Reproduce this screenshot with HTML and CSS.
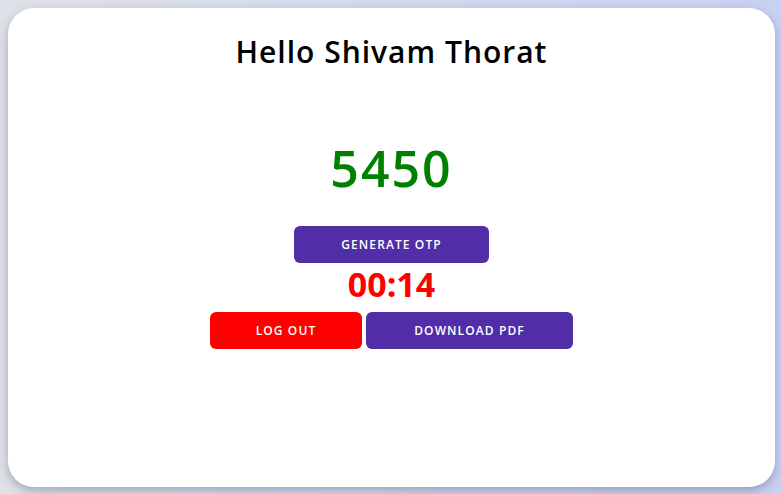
FILE: index.html
```html
<!DOCTYPE html>
<html lang="en">
<head>
<meta charset="utf-8">
<title>OTP</title>
<link rel="stylesheet" href="styles.css">
</head>
<body>
  <main class="card">
    <h1 class="greeting">Hello Shivam Thorat</h1>
    <div class="otp">5450</div>
    <button class="btn btn-primary btn-generate">Generate OTP</button>
    <div class="timer">00:14</div>
    <div class="actions">
      <button class="btn btn-danger btn-logout">Log out</button>
      <button class="btn btn-primary btn-download">Download PDF</button>
    </div>
  </main>
</body>
</html>
```
FILE: styles.css
```css
html, body {
  height: 100%;
}
body {
  margin: 0;
  padding: 8px;
  box-sizing: border-box;
  background: linear-gradient(90deg, #dfe1e8 0%, #d3d8ec 50%, #c8d0f3 100%);
  font-family: "Open Sans", "DejaVu Sans", sans-serif;
}
.card {
  box-sizing: border-box;
  width: 767px;
  height: 479px;
  background: #ffffff;
  border-radius: 26px;
  box-shadow: 0 4px 10px rgba(60, 65, 90, 0.35);
  display: flex;
  flex-direction: column;
  align-items: center;
  padding-top: 26px;
}
.greeting {
  margin: 0;
  font-size: 30px;
  line-height: 36px;
  font-weight: 600;
  color: #000;
  letter-spacing: 1px;
}
.otp {
  margin-top: 69px;
  font-size: 50px;
  line-height: 58px;
  font-weight: 600;
  color: #008000;
  letter-spacing: 2px;
}
.btn {
  border: none;
  border-radius: 6px;
  height: 37px;
  color: #fff;
  font-family: inherit;
  font-size: 12px;
  font-weight: 600;
  letter-spacing: 1.1px;
  text-transform: uppercase;
  padding: 0;
}
.btn-primary {
  background: #512da8;
}
.btn-danger {
  background: #ff0000;
}
.btn-generate {
  margin-top: 29px;
  width: 195px;
}
.timer {
  margin-top: 1px;
  font-size: 34px;
  line-height: 40px;
  font-weight: 700;
  color: #ff0000;
}
.actions {
  margin-top: 8px;
  display: flex;
  gap: 4px;
}
.btn-logout {
  width: 152px;
}
.btn-download {
  width: 207px;
}
```
